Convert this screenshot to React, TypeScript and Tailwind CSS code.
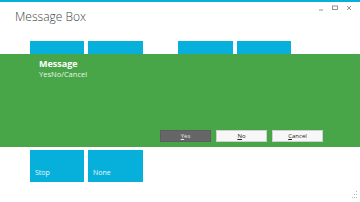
import React from 'react'

const font = { fontFamily: '"Open Sans", "Noto Sans", "Liberation Sans", sans-serif' }

function Tile({ label, wide }: { label?: string; wide?: boolean }) {
  return (
    <div className={`relative h-[32px] ${wide ? 'w-[55px]' : 'w-[54px]'} bg-[#07afdb]`}>
      {label ? (
        <span className="absolute left-[5px] bottom-[6px] text-[7px] leading-none text-[#eaf8fc]">{label}</span>
      ) : null}
    </div>
  )
}

function DialogButton({ label, primary }: { label: string; primary?: boolean }) {
  return (
    <button
      type="button"
      className={`flex h-[12px] w-[51px] items-center justify-center border text-[6px] leading-none ${
        primary ? 'border-[#5e5e5e] bg-[#666666] text-[#e8e8e8]' : 'border-[#d0d0d0] bg-[#f7f7f7] text-[#222222]'
      }`}
    >
      <span>
        <span className="underline">{label[0]}</span>
        {label.slice(1)}
      </span>
    </button>
  )
}

export default function App() {
  return (
    <div className="relative h-[202px] w-[360px] overflow-hidden bg-white" style={font}>
      <div className="h-[2px] bg-[#07afdb]" />

      <div className="flex h-[29px] items-start justify-between">
        <div className="pl-[15px] pt-[8px] text-[12px] font-light leading-[14px] text-[#444444]">Message Box</div>
        <div className="flex items-center gap-[8px] pr-[8px] pt-[3px] text-[#777777]">
          <svg width="6" height="6" viewBox="0 0 6 6">
            <line x1="1" y1="5" x2="5" y2="5" stroke="currentColor" strokeWidth="0.8" />
          </svg>
          <svg width="6" height="6" viewBox="0 0 6 6">
            <rect x="0.5" y="1" width="5" height="3.5" fill="none" stroke="currentColor" strokeWidth="0.8" />
          </svg>
          <svg width="6" height="6" viewBox="0 0 6 6">
            <path d="M1 1 L5 5 M5 1 L1 5" stroke="currentColor" strokeWidth="0.8" />
          </svg>
        </div>
      </div>

      <div className="mt-[10px] flex pl-[30px]">
        <div className="flex gap-[4px]">
          <Tile />
          <Tile wide />
        </div>
        <div className="ml-[35px] flex gap-[4px]">
          <Tile wide />
          <Tile />
        </div>
      </div>

      <div className="mt-[77px] flex gap-[4px] pl-[30px]">
        <Tile label="Stop" />
        <Tile label="None" wide />
      </div>

      <div className="absolute left-0 right-0 top-[54px] flex h-[93px] flex-col bg-[#48a548] pl-[39px] pr-[37px]">
        <div className="pt-[4px] text-[9px] font-bold leading-[11px] text-white">Message</div>
        <div className="text-[7.5px] leading-[10px] text-[#eaf5ea]">YesNo/Cancel</div>
        <div className="mt-auto mb-[5px] flex justify-end gap-[5px]">
          <DialogButton label="Yes" primary />
          <DialogButton label="No" />
          <DialogButton label="Cancel" />
        </div>
      </div>

      <svg className="absolute bottom-[2px] right-[2px]" width="7" height="10" viewBox="0 0 7 10">
        <rect x="5" y="1" width="1" height="1" fill="#b5b5b5" />
        <rect x="5" y="4" width="1" height="1" fill="#b5b5b5" />
        <rect x="3" y="4" width="1" height="1" fill="#b5b5b5" />
        <rect x="5" y="7" width="1" height="1" fill="#b5b5b5" />
        <rect x="3" y="7" width="1" height="1" fill="#b5b5b5" />
        <rect x="1" y="7" width="1" height="1" fill="#b5b5b5" />
      </svg>
    </div>
  )
}
